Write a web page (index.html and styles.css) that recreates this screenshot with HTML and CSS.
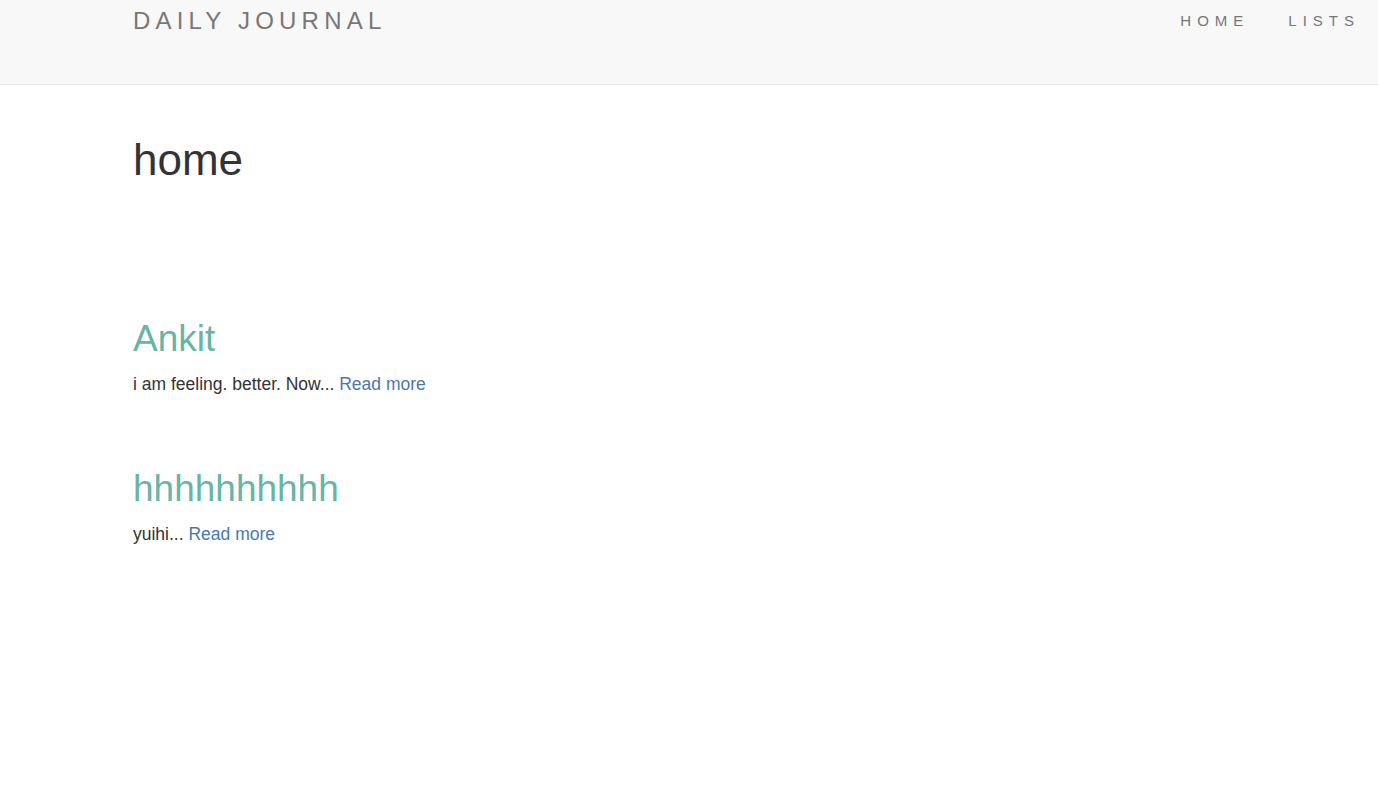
FILE: index.html
```html
<!DOCTYPE html>
<html>
<head>
<meta charset="utf-8">
<title>Daily Journal</title>
<link rel="stylesheet" href="styles.css">
</head>
<body>
<nav class="navbar">
  <a class="brand" href="#">DAILY JOURNAL</a>
  <ul class="nav-links">
    <li><a href="#">HOME</a></li>
    <li><a href="#">LISTS</a></li>
  </ul>
</nav>
<main class="container">
  <h1 class="page-title">home</h1>
  <article class="post">
    <h2 class="post-title">Ankit</h2>
    <p class="post-body">i am feeling. better. Now... <a href="#">Read more</a></p>
  </article>
  <article class="post">
    <h2 class="post-title">hhhhhhhhhh</h2>
    <p class="post-body">yuihi... <a href="#">Read more</a></p>
  </article>
</main>
</body>
</html>
```
FILE: styles.css
```css
* { box-sizing: border-box; }
html, body { margin: 0; padding: 0; background: #fff; }
body { font-family: "Liberation Sans", Arial, sans-serif; color: #333; }
a { text-decoration: none; }

.navbar {
  height: 85px;
  background: #f8f8f8;
  border-bottom: 1px solid #e7e7e7;
  display: flex;
  justify-content: space-between;
  align-items: flex-start;
  padding: 0 0 0 133px;
}
.brand {
  font-size: 24px;
  line-height: 24px;
  letter-spacing: 5.2px;
  color: #777;
  padding-top: 9px;
}
.nav-links {
  list-style: none;
  margin: 0;
  padding: 0 18px 0 0;
  display: flex;
  gap: 39px;
}
.nav-links a {
  font-size: 15px;
  line-height: 16px;
  letter-spacing: 6px;
  color: #777;
  display: block;
  padding-top: 13px;
}

.container {
  padding: 51px 133px 0 133px;
  display: flex;
  flex-direction: column;
  gap: 73px;
}
.page-title {
  font-size: 44px;
  font-weight: 500;
  line-height: 48px;
  margin: 0 0 62px 0;
}
.post {
  display: flex;
  flex-direction: column;
  gap: 13px;
}
.post-title {
  font-size: 37px;
  font-weight: 500;
  line-height: 40px;
  color: #67b5a6;
  margin: 0;
}
.post-body {
  font-size: 17.5px;
  line-height: 24px;
  margin: 0;
}
.post-body a { color: #4a77b4; }
```
